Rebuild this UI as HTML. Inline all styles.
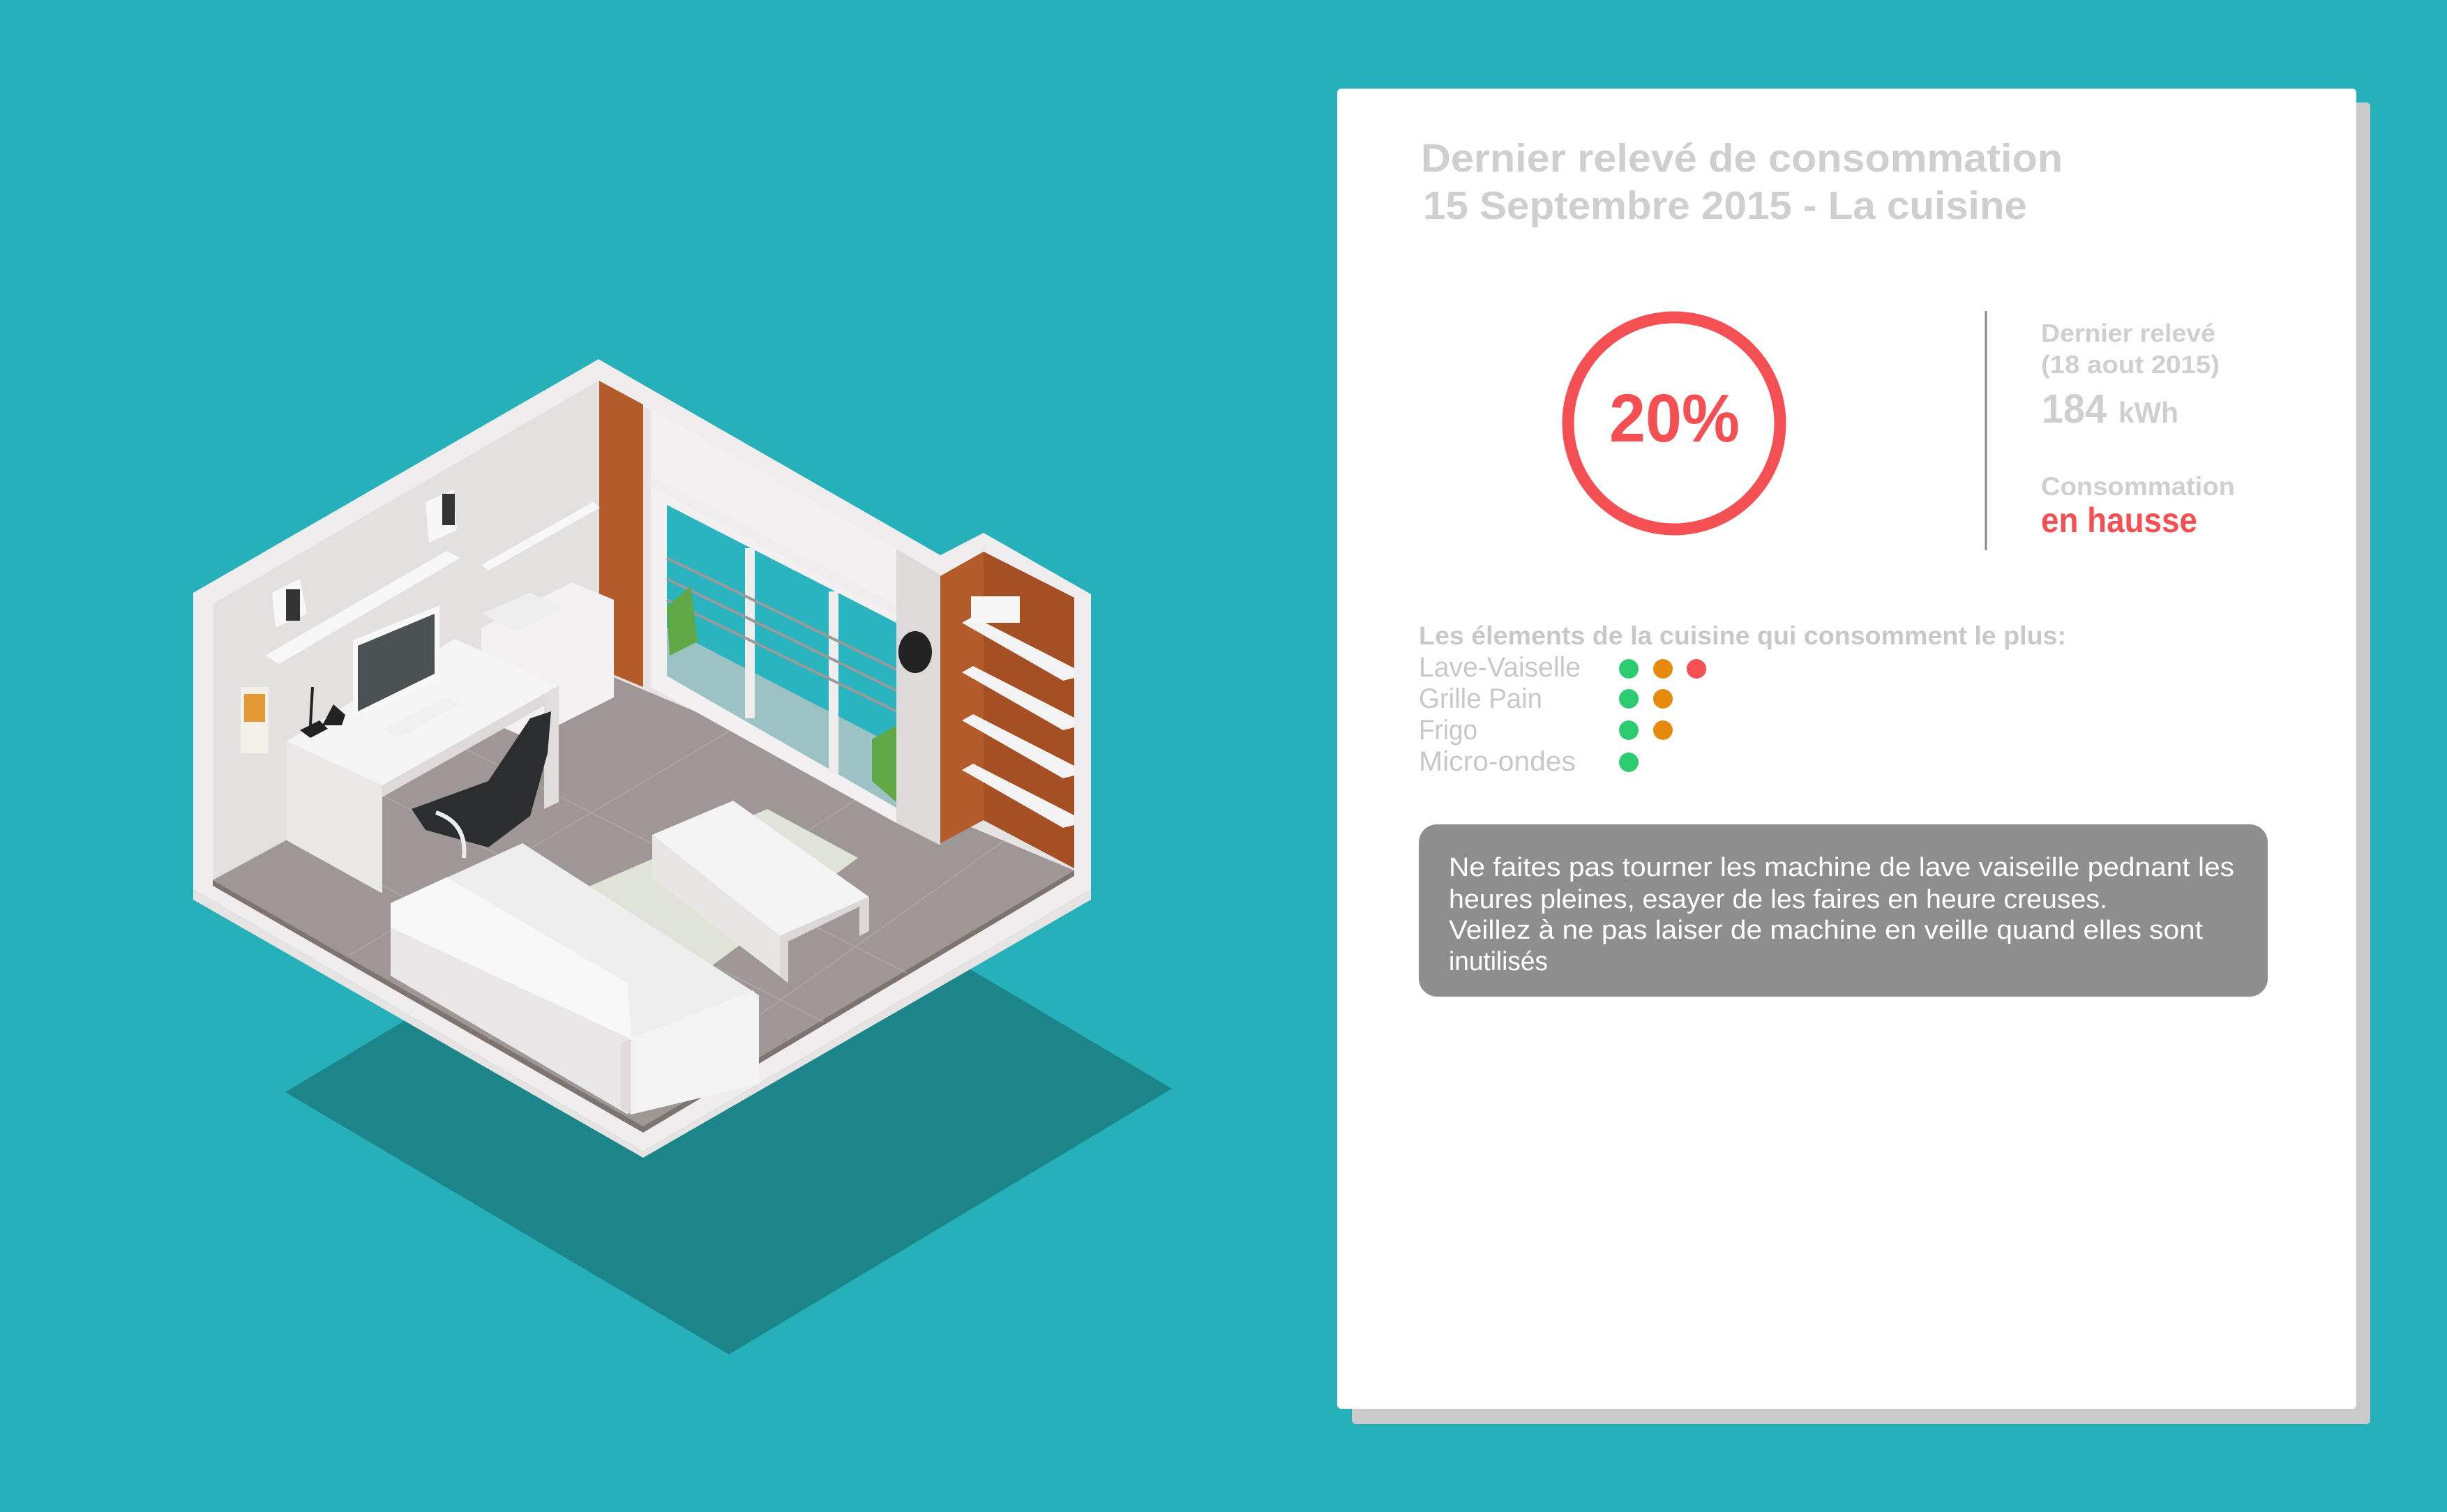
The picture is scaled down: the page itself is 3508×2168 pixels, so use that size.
<!DOCTYPE html>
<html><head><meta charset="utf-8"><style>
html,body{margin:0;padding:0;background:#26b0b9;}
svg{display:block}
</style></head><body>
<svg width="3508" height="2168" viewBox="0 0 3508 2168" xmlns="http://www.w3.org/2000/svg" font-family="'Liberation Sans', sans-serif">
<rect width="3508" height="2168" fill="#26b0b9"/>
<polygon points="409,1566 1045,1185 1680,1561 1045,1942" fill="#1b8589"/>
<polygon points="277,850 858,515 1348,796 1410,764 1564,852 1564,1275 922,1651 277,1275" fill="#efeded"/>
<polygon points="305,866 858,546 858,965 305,1262" fill="#e3e0e0"/>
<polygon points="858,546 1540,935 1540,1248 858,962" fill="#e6e3e3"/>
<polygon points="305,1262 858,962 1540,1248 922,1615" fill="#9e9795"/>
<polygon points="305,1262 922,1615 1540,1248 1540,1256 922,1624 305,1270" fill="#7d7370"/>
<polygon points="277,1275 922,1651 1564,1275 1564,1290 922,1660 277,1290" fill="#e6e3e3"/>
<g stroke="#b3adab" stroke-width="2" opacity="0.6">
<line x1="420" y1="1200" x2="1050" y2="1540"/><line x1="540" y1="1136" x2="1180" y2="1465"/><line x1="660" y1="1070" x2="1300" y2="1395"/>
<line x1="500" y1="1370" x2="1060" y2="1040"/><line x1="700" y1="1490" x2="1260" y2="1125"/><line x1="900" y1="1590" x2="1440" y2="1205"/>
</g>
<polygon points="859,546 922,580 922,985 859,959" fill="#b35b2b"/>
<polygon points="933,586 1285,787 1285,1180 933,985" fill="#f2f0f0"/>
<polygon points="956,724 1285,893 1285,1158 956,969" fill="#2ab4c0"/>
<polygon points="956,900 1285,1070 1285,1158 956,969" fill="#cfc7c4" opacity="0.7"/>
<g stroke="#efeded" stroke-width="14">
<line x1="1075" y1="786" x2="1075" y2="1030"/><line x1="1195" y1="848" x2="1195" y2="1110"/>
<line x1="933" y1="690" x2="1285" y2="875"/>
</g>
<g stroke="#9a9a9a" stroke-width="4">
<line x1="956" y1="800" x2="1285" y2="960"/><line x1="956" y1="830" x2="1285" y2="990"/><line x1="956" y1="860" x2="1285" y2="1020"/>
</g>
<polygon points="956,870 990,840 1000,920 960,940" fill="#5fa845"/>
<polygon points="1250,1060 1285,1040 1285,1150 1250,1120" fill="#5fa845"/>
<polygon points="1285,787 1348,824 1348,1212 1285,1180" fill="#dedada"/>
<ellipse cx="1312" cy="935" rx="24" ry="30" fill="#222"/>
<polygon points="1348,826 1410,791 1540,857 1540,1245 1410,1176 1348,1209" fill="#b35b2b"/>
<polygon points="1410,791 1540,857 1540,1245 1410,1176" fill="#a44f24"/>
<g fill="#f4f3f3">
<polygon points="1379,893 1395,884 1540,958 1540,972 1524,976"/>
<polygon points="1379,964 1395,955 1540,1029 1540,1043 1524,1047"/>
<polygon points="1379,1033 1395,1024 1540,1098 1540,1112 1524,1116"/>
<polygon points="1379,1104 1395,1095 1540,1169 1540,1183 1524,1187"/>
<rect x="1392" y="855" width="70" height="38" fill="#f7f7f7"/>
</g>
<g fill="#f7f7f7">
<polygon points="380,940 640,790 660,800 400,952"/>
<polygon points="690,810 850,720 860,728 700,818"/>
<polygon points="390,850 430,830 440,880 395,900"/>
<polygon points="610,720 650,702 655,760 615,778"/>
</g>
<rect x="410" y="845" width="20" height="45" fill="#333"/>
<rect x="634" y="708" width="18" height="45" fill="#333"/>
<rect x="345" y="985" width="40" height="95" fill="#f4f0e8"/><rect x="350" y="995" width="30" height="40" fill="#e39a35"/>
<polygon points="690,900 820,835 880,860 880,1000 760,1060 690,1030" fill="#f3f1f1"/>
<polygon points="690,880 760,850 810,872 740,905" fill="#eeeeee"/>
<polygon points="411,1063 652,916 801,983 548,1126" fill="#f6f5f5"/>
<polygon points="411,1063 548,1126 548,1281 411,1205" fill="#ebe8e8"/>
<polygon points="548,1126 801,983 801,1000 548,1143" fill="#dedada"/>
<polygon points="780,995 801,983 801,1150 780,1160" fill="#e0dddd"/>
<polygon points="506,918 630,868 630,975 506,1030" fill="#f8f8f8"/>
<polygon points="513,926 623,880 623,966 513,1020" fill="#4c5252"/>
<polygon points="550,1045 640,1000 660,1010 570,1058" fill="#f0f0f0"/>
<polygon points="430,1047 458,1033 470,1045 445,1058" fill="#222"/>
<line x1="445" y1="1040" x2="448" y2="985" stroke="#222" stroke-width="4"/>
<polygon points="462,1040 478,1010 495,1025 490,1040" fill="#222"/>
<polygon points="590,1160 700,1120 760,1030 790,1020 785,1080 760,1170 700,1215 610,1190" fill="#2c2d2f"/>
<path d="M625,1165 Q670,1180 665,1230" stroke="#eee" stroke-width="6" fill="none"/>
<polygon points="835,1275 1100,1160 1230,1230 1000,1400 860,1420" fill="#dfe3d8"/>
<polygon points="935,1197 1051,1148 1246,1286 1118,1342" fill="#f5f4f4"/>
<polygon points="935,1197 1118,1342 1118,1400 935,1260" fill="#e8e5e5"/>
<polygon points="1118,1342 1246,1286 1246,1335 1232,1342 1232,1300 1130,1350 1130,1410 1118,1400" fill="#dcd8d8"/>
<polygon points="560,1295 749,1209 1088,1427 1088,1554 887,1588 560,1399" fill="#efeeee"/>
<polygon points="560,1295 640,1258 900,1410 905,1490 560,1330" fill="#f8f8f8"/>
<polygon points="560,1330 905,1490 900,1598 560,1399" fill="#e9e7e7"/>
<polygon points="890,1495 1080,1420 1088,1440 1088,1554 905,1598" fill="#f4f3f3"/>
<polygon points="890,1495 905,1490 905,1598 890,1590" fill="#e0dcdc"/>

<rect x="1938" y="147" width="1460" height="1895" rx="6" fill="#cbcbcb"/>
<rect x="1917" y="127" width="1461" height="1893" rx="6" fill="#ffffff"/>
<g fill="#cfcfcf" font-weight="bold">
<text x="2037" y="246" font-size="57" textLength="920" lengthAdjust="spacingAndGlyphs">Dernier relevé de consommation</text>
<text x="2040" y="314" font-size="57" textLength="866" lengthAdjust="spacingAndGlyphs">15 Septembre 2015 - La cuisine</text>
</g>
<circle cx="2400" cy="607" r="152" fill="none" stroke="#f45054" stroke-width="17"/>
<text x="2307" y="633" font-size="97" font-weight="bold" fill="#f45054" textLength="187" lengthAdjust="spacingAndGlyphs">20%</text>
<line x1="2847" y1="446" x2="2847" y2="789" stroke="#8a8a8a" stroke-width="3"/>
<g fill="#cfcfcf" font-weight="bold">
<text x="2926" y="490" font-size="36" textLength="250" lengthAdjust="spacingAndGlyphs">Dernier relevé</text>
<text x="2926" y="535" font-size="36" textLength="256" lengthAdjust="spacingAndGlyphs">(18 aout 2015)</text>
<text x="2927" y="606" font-size="58" textLength="93" lengthAdjust="spacingAndGlyphs">184</text>
<text x="3037" y="606" font-size="42" textLength="86" lengthAdjust="spacingAndGlyphs">kWh</text>
<text x="2926" y="710" font-size="37" textLength="278" lengthAdjust="spacingAndGlyphs">Consommation</text>
</g>
<text x="2926" y="763" font-size="50" font-weight="bold" fill="#f45054" textLength="224" lengthAdjust="spacingAndGlyphs">en hausse</text>
<text x="2034" y="924" font-size="37" font-weight="bold" fill="#c8c8c8" textLength="928" lengthAdjust="spacingAndGlyphs">Les élements de la cuisine qui consomment le plus:</text>
<g fill="#c8c8c8" font-size="40">
<text x="2034" y="970" textLength="232" lengthAdjust="spacingAndGlyphs">Lave-Vaiselle</text>
<text x="2034" y="1015" textLength="177" lengthAdjust="spacingAndGlyphs">Grille Pain</text>
<text x="2034" y="1060" textLength="84" lengthAdjust="spacingAndGlyphs">Frigo</text>
<text x="2034" y="1105" textLength="225" lengthAdjust="spacingAndGlyphs">Micro-ondes</text>
</g>
<g>
<ellipse cx="2335" cy="959" rx="14" ry="14" fill="#2ecc71"/><ellipse cx="2384" cy="959" rx="14" ry="14" fill="#e68a0e"/><ellipse cx="2432" cy="959" rx="14" ry="14" fill="#f45054"/>
<ellipse cx="2335" cy="1002" rx="14" ry="14" fill="#2ecc71"/><ellipse cx="2384" cy="1002" rx="14" ry="14" fill="#e68a0e"/>
<ellipse cx="2335" cy="1047" rx="14" ry="14" fill="#2ecc71"/><ellipse cx="2384" cy="1047" rx="14" ry="14" fill="#e68a0e"/>
<ellipse cx="2335" cy="1093" rx="14" ry="14" fill="#2ecc71"/>
</g>
<rect x="2034" y="1182" width="1217" height="247" rx="26" fill="#8e8e8e"/>
<g fill="#ffffff" font-size="38">
<text x="2077" y="1256" textLength="1126" lengthAdjust="spacingAndGlyphs">Ne faites pas tourner les machine de lave vaiseille pednant les</text>
<text x="2077" y="1302" textLength="944" lengthAdjust="spacingAndGlyphs">heures pleines, esayer de les faires en heure creuses.</text>
<text x="2077" y="1346" textLength="1081" lengthAdjust="spacingAndGlyphs">Veillez à ne pas laiser de machine en veille quand elles sont</text>
<text x="2077" y="1391" textLength="142" lengthAdjust="spacingAndGlyphs">inutilisés</text>
</g>
</svg>
</body></html>
